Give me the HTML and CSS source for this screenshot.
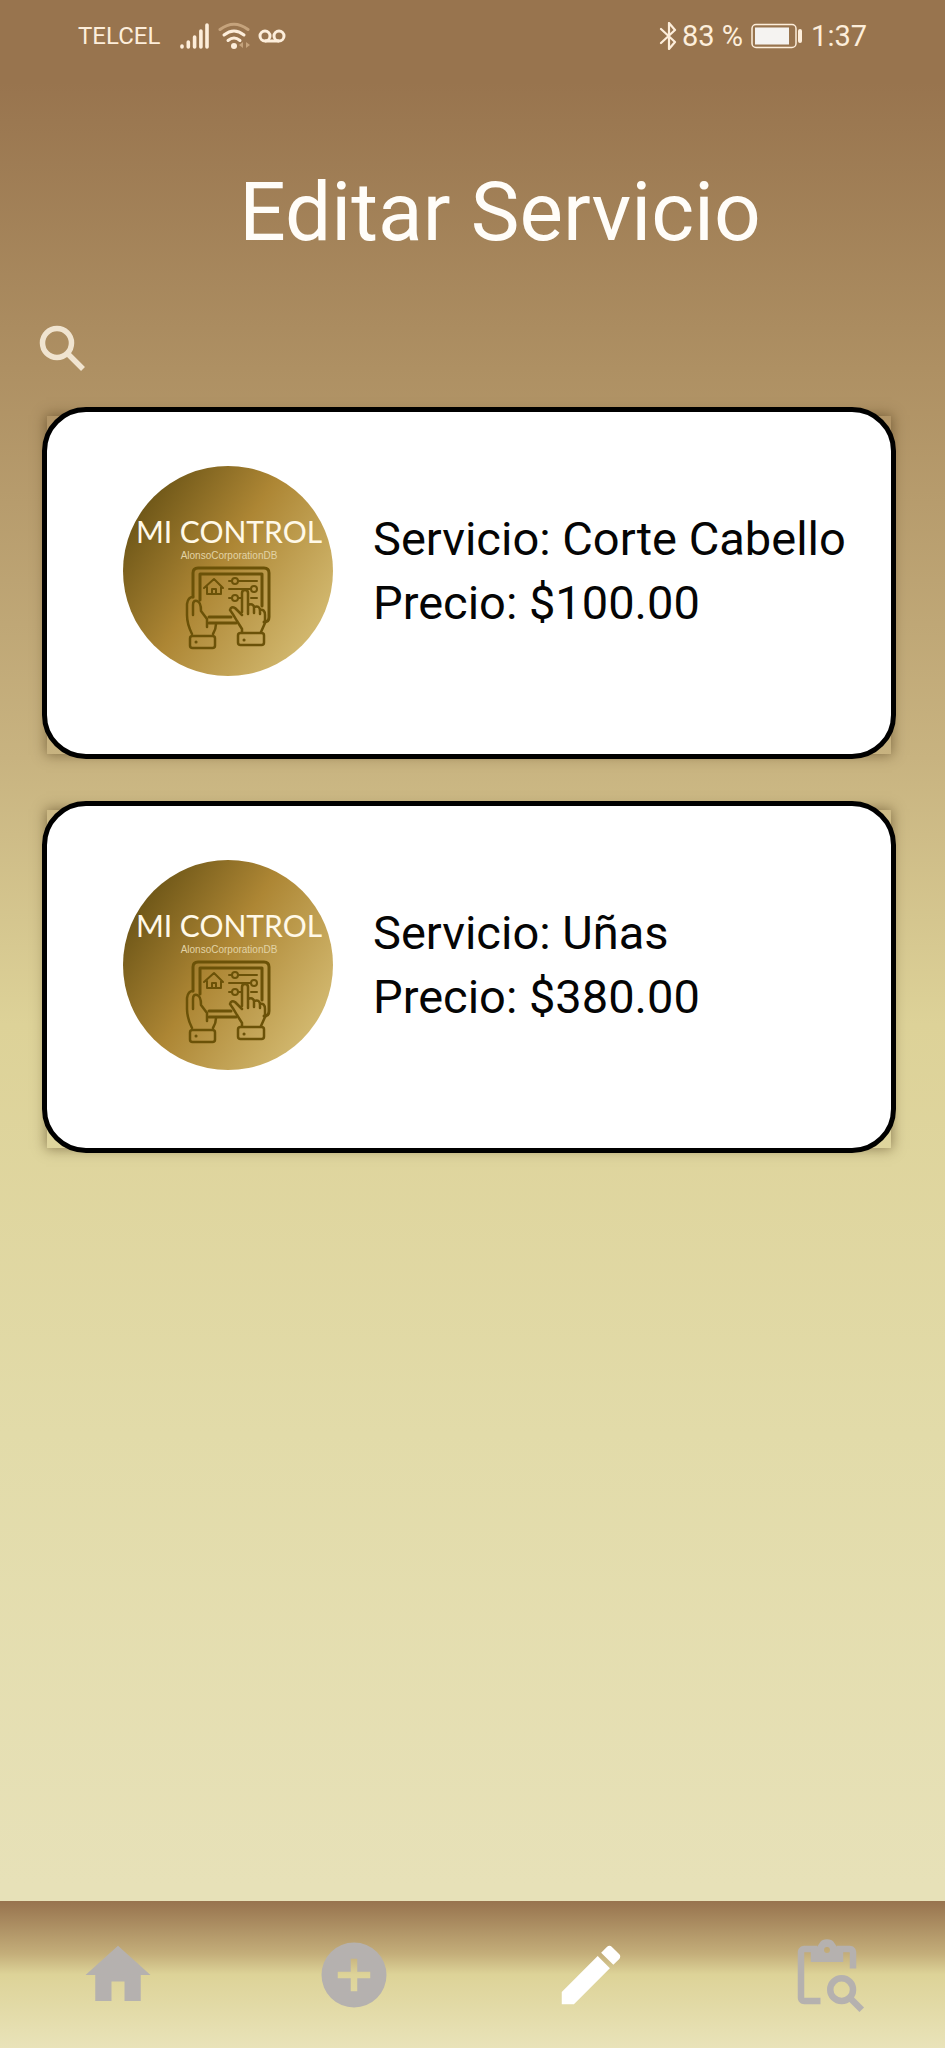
FILE: index.html
```html
<!DOCTYPE html>
<html lang="es">
<head>
<meta charset="utf-8">
<meta name="viewport" content="width=device-width, initial-scale=1">
<title>Editar Servicio</title>
<link rel="stylesheet" href="styles.css">
</head>
<body>
<svg class="defs" aria-hidden="true">
  <defs>
    <linearGradient id="gold" x1="0.05" y1="0.2" x2="0.95" y2="0.8">
      <stop offset="0" stop-color="#6b5416"/>
      <stop offset="0.45" stop-color="#ad8634"/>
      <stop offset="1" stop-color="#d4bb72"/>
    </linearGradient>
    <symbol id="logo" viewBox="0 0 210 210">
      <circle cx="105" cy="105" r="105" fill="url(#gold)"/>
      <text class="logo-name" x="106" y="77" text-anchor="middle">MI CONTROL</text>
      <text class="logo-sub" x="106" y="93" text-anchor="middle">AlonsoCorporationDB</text>
      <g fill="none" stroke="#6b5208" stroke-width="3" stroke-linejoin="round" stroke-linecap="round">
        <path d="M70 131V107q0-5 5-5H141q5 0 5 5V151q0 5-5 5"/>
        <path d="M77 134V108H139V140M86 151H108M86 157H113"/>
        <path d="M81 122L91 113L100 122M84 121V128H98V121M89 128V123H93V128" stroke-width="2"/>
        <path d="M106 115H109M115 115H134M106 123H127M106 132H109M115 132H119M128 132H134" stroke-width="2"/>
        <circle cx="112" cy="115" r="3" stroke-width="2"/>
        <circle cx="131" cy="123" r="3" stroke-width="2"/>
        <circle cx="112" cy="132" r="3" stroke-width="2"/>
        <path d="M69 168Q64 158 64 149V138Q65 131 70 131M70 149V139Q70 134 74 135Q78 136 78 145L84 153V161M93 158Q93 163 90 168" stroke-width="2.5"/>
        <path d="M119 146V127Q119 124 122 124T125 127V148M125 139Q130 137 131 141V147M131 141Q137 139 137 145V148M137 144Q142 143 142 149V157L138 166M119 149L112 142Q108 140 107 144Q110 148 114 155L119 163V166" stroke-width="2.5"/>
        <rect x="67" y="170" width="25" height="12" rx="2.5" stroke-width="2.5"/>
        <rect x="115" y="167" width="26" height="12" rx="2.5" stroke-width="2.5"/>
        <path d="M73 176h.1M121 174h.1"/>
      </g>
    </symbol>
  </defs>
</svg>

<div class="screen">
  <header class="status-bar">
    <div class="status-group status-left">
      <span class="carrier">TELCEL</span>
      <svg class="signal" viewBox="0 0 30 28" aria-hidden="true">
        <g stroke="#fdeedb" stroke-width="3.6" stroke-linecap="round">
          <path d="M2 25v-1M8.300 25v-5M14.600 25v-10M20.900 25V9M27 25V3"/>
        </g>
      </svg>
      <svg class="wifi" viewBox="0 0 32 28" aria-hidden="true">
        <g fill="none" stroke="#fdeedb" stroke-width="3" stroke-linecap="round">
          <path d="M2 7.500Q16-3 30 7.500" stroke="#c5a37c"/>
          <path d="M6 13Q16 5 26 13M10 18.500Q16 13.500 22 18.500"/>
        </g>
        <circle cx="16" cy="24" r="3" fill="#fdeedb"/>
        <path d="M21 23l4-3v6zM32 23l-4-3v6z" fill="#c5a37c"/>
      </svg>
      <svg class="voicemail" viewBox="0 0 28 14" aria-hidden="true">
        <g fill="none" stroke="#fdeedb" stroke-width="3">
          <circle cx="7" cy="7" r="5"/><circle cx="21" cy="7" r="5"/><path d="M7 12H21"/>
        </g>
      </svg>
    </div>
    <div class="status-group">
      <svg class="bluetooth" viewBox="0 0 18 28" aria-hidden="true">
        <path d="M2 7L16 20L10 27V1L16 8L2 21" fill="none" stroke="#fdeedb" stroke-width="2.200" stroke-linejoin="round" stroke-linecap="round"/>
      </svg>
      <span class="percent">83 %</span>
      <svg class="battery" viewBox="0 0 52 26" aria-hidden="true">
        <rect x="1" y="1.500" width="44" height="23" rx="4" fill="none" stroke="#fdeedb" stroke-width="1.500"/>
        <rect x="4" y="4.500" width="34" height="17" fill="#f5f3f1"/>
        <rect x="47" y="6" width="4" height="14" rx="2" fill="#fdeedb"/>
      </svg>
      <time class="clock">1:37</time>
    </div>
  </header>

  <main class="content">
    <h1 class="title">Editar Servicio</h1>
    <button class="search" type="button" aria-label="Buscar">
      <svg viewBox="0 0 48 48" aria-hidden="true">
        <g fill="none" stroke="#f0e4d0">
          <circle cx="19" cy="19" r="14.500" stroke-width="5.500"/>
          <path d="M30 30L45 45" stroke-width="5.500"/>
        </g>
      </svg>
    </button>
    <ul class="services">
      <li class="card">
        <svg class="logo" role="img" aria-label="Mi Control"><use href="#logo"/></svg>
        <div class="details">
          <p>Servicio: Corte Cabello</p>
          <p>Precio: $100.00</p>
        </div>
      </li>
      <li class="card">
        <svg class="logo" role="img" aria-label="Mi Control"><use href="#logo"/></svg>
        <div class="details">
          <p>Servicio: Uñas</p>
          <p>Precio: $380.00</p>
        </div>
      </li>
    </ul>
  </main>

  <nav class="tabs">
    <a class="tab" href="#inicio" aria-label="Inicio">
      <svg viewBox="0 0 24 24"><path d="M10 20V14H14V20H19V12H22L12 3L2 12H5V20Z"/></svg>
    </a>
    <a class="tab" href="#agregar" aria-label="Agregar">
      <svg viewBox="0 0 24 24"><path d="M17 13H13V17H11V13H7V11H11V7H13V11H17M12 2A10 10 0 0 0 2 12A10 10 0 0 0 12 22A10 10 0 0 0 22 12A10 10 0 0 0 12 2Z"/></svg>
    </a>
    <a class="tab tab-active" href="#editar" aria-label="Editar" aria-current="page">
      <svg viewBox="0 0 24 24"><path d="M20.710 7.040C21.100 6.650 21.100 6 20.710 5.630L18.370 3.290C18 2.900 17.350 2.900 16.960 3.290L15.120 5.120L18.870 8.870M3 17.250V21H6.750L17.810 9.930L14.060 6.180L3 17.250Z"/></svg>
    </a>
    <a class="tab" href="#consultar" aria-label="Consultar">
      <svg viewBox="0 0 24 24">
        <path d="M9 3H5C3.900 3 3 3.900 3 5V19C3 20.100 3.900 21 5 21H10V19H5V5H9ZM15 3H19C20.100 3 21 3.900 21 5V10H19V5H15Z"/>
        <path fill-rule="evenodd" d="M7 8V4H8.500L10 1.800Q10.500 1 12 1T14 1.800L15.500 4H17V8ZM12 3.400A0.900 0.900 0 1 0 12 5.200A0.900 0.900 0 1 0 12 3.400Z"/>
        <g fill="none" stroke="currentColor" stroke-width="2"><circle cx="16.500" cy="16.500" r="3.500"/><path d="M19 19L22.700 22.700"/></g>
      </svg>
    </a>
  </nav>
</div>
</body>
</html>
```

FILE: styles.css
```css
* {
  box-sizing: border-box;
}

body {
  margin: 0;
  font-family: Roboto, "Liberation Sans", sans-serif;
}

.defs {
  position: absolute;
  width: 0;
  height: 0;
}

.screen {
  display: flex;
  flex-direction: column;
  min-height: 100vh;
  background: linear-gradient(#98744e 0, #98744e 4%, #ae9063 18%, #c8b380 37%, #ddd298 50%, #e2dba9 70%, #e7e1b8 92%);
}

.status-bar {
  display: flex;
  justify-content: space-between;
  align-items: center;
  height: 72px;
  padding: 0 78px;
  color: #fdeedb;
}

.status-group {
  display: flex;
  align-items: center;
}

.carrier {
  font-size: 24px;
  margin-right: 20px;
}

.signal {
  width: 30px;
  height: 28px;
  margin-right: 8px;
}

.wifi {
  width: 32px;
  height: 28px;
  margin-right: 8px;
}

.voicemail {
  width: 28px;
  height: 14px;
}

.bluetooth {
  width: 18px;
  height: 28px;
  margin-right: 5px;
}

.percent,
.clock {
  font-size: 29px;
}

.battery {
  width: 52px;
  height: 26px;
  margin: 0 8px;
}

.content {
  flex: 1;
  padding: 90px 49px 48px 42px;
}

.title {
  margin: 0 0 62px;
  padding-left: 62px;
  font-size: 82px;
  line-height: 100px;
  font-weight: 400;
  text-align: center;
  color: #fffdf9;
}

.search {
  display: block;
  width: 48px;
  height: 48px;
  margin: 0 0 35px -4px;
  padding: 0;
  border: 0;
  background: none;
}

.search svg {
  display: block;
  width: 100%;
  height: 100%;
}

.services {
  position: relative;
  z-index: 0;
  display: flex;
  flex-direction: column;
  gap: 42px;
  margin: 0;
  padding: 0;
  list-style: none;
}

.card {
  position: relative;
  display: flex;
  align-items: center;
  gap: 40px;
  min-height: 352px;
  padding: 0 32px 24px 76px;
  border: 5px solid #000;
  border-radius: 44px;
  background: #fff;
}

.card::before {
  content: "";
  position: absolute;
  z-index: -1;
  inset: 4px 0 0;
  box-shadow: 0 0 12px 1px rgba(60, 40, 10, 0.5);
}

.logo {
  flex: none;
  width: 210px;
  height: 210px;
}

.logo-name {
  font-family: Lato, sans-serif;
  font-size: 30px;
  fill: #fff9e8;
}

.logo-sub {
  font-family: "Liberation Sans", sans-serif;
  font-size: 10px;
  fill: #e2d3a6;
}

.details p {
  margin: 0;
  font-size: 47px;
  line-height: 64px;
  color: #050505;
}

.tabs {
  display: grid;
  grid-template-columns: repeat(4, 1fr);
  height: 147px;
  background: linear-gradient(#97734e, #c4ae7a 36%, #ddd398 50%, #e9e3b9);
}

.tab {
  display: flex;
  justify-content: center;
  align-items: center;
  color: #b5b1af;
}

.tab svg {
  width: 78px;
  height: 78px;
  fill: currentColor;
}

.tab-active {
  color: #fff;
}
```
